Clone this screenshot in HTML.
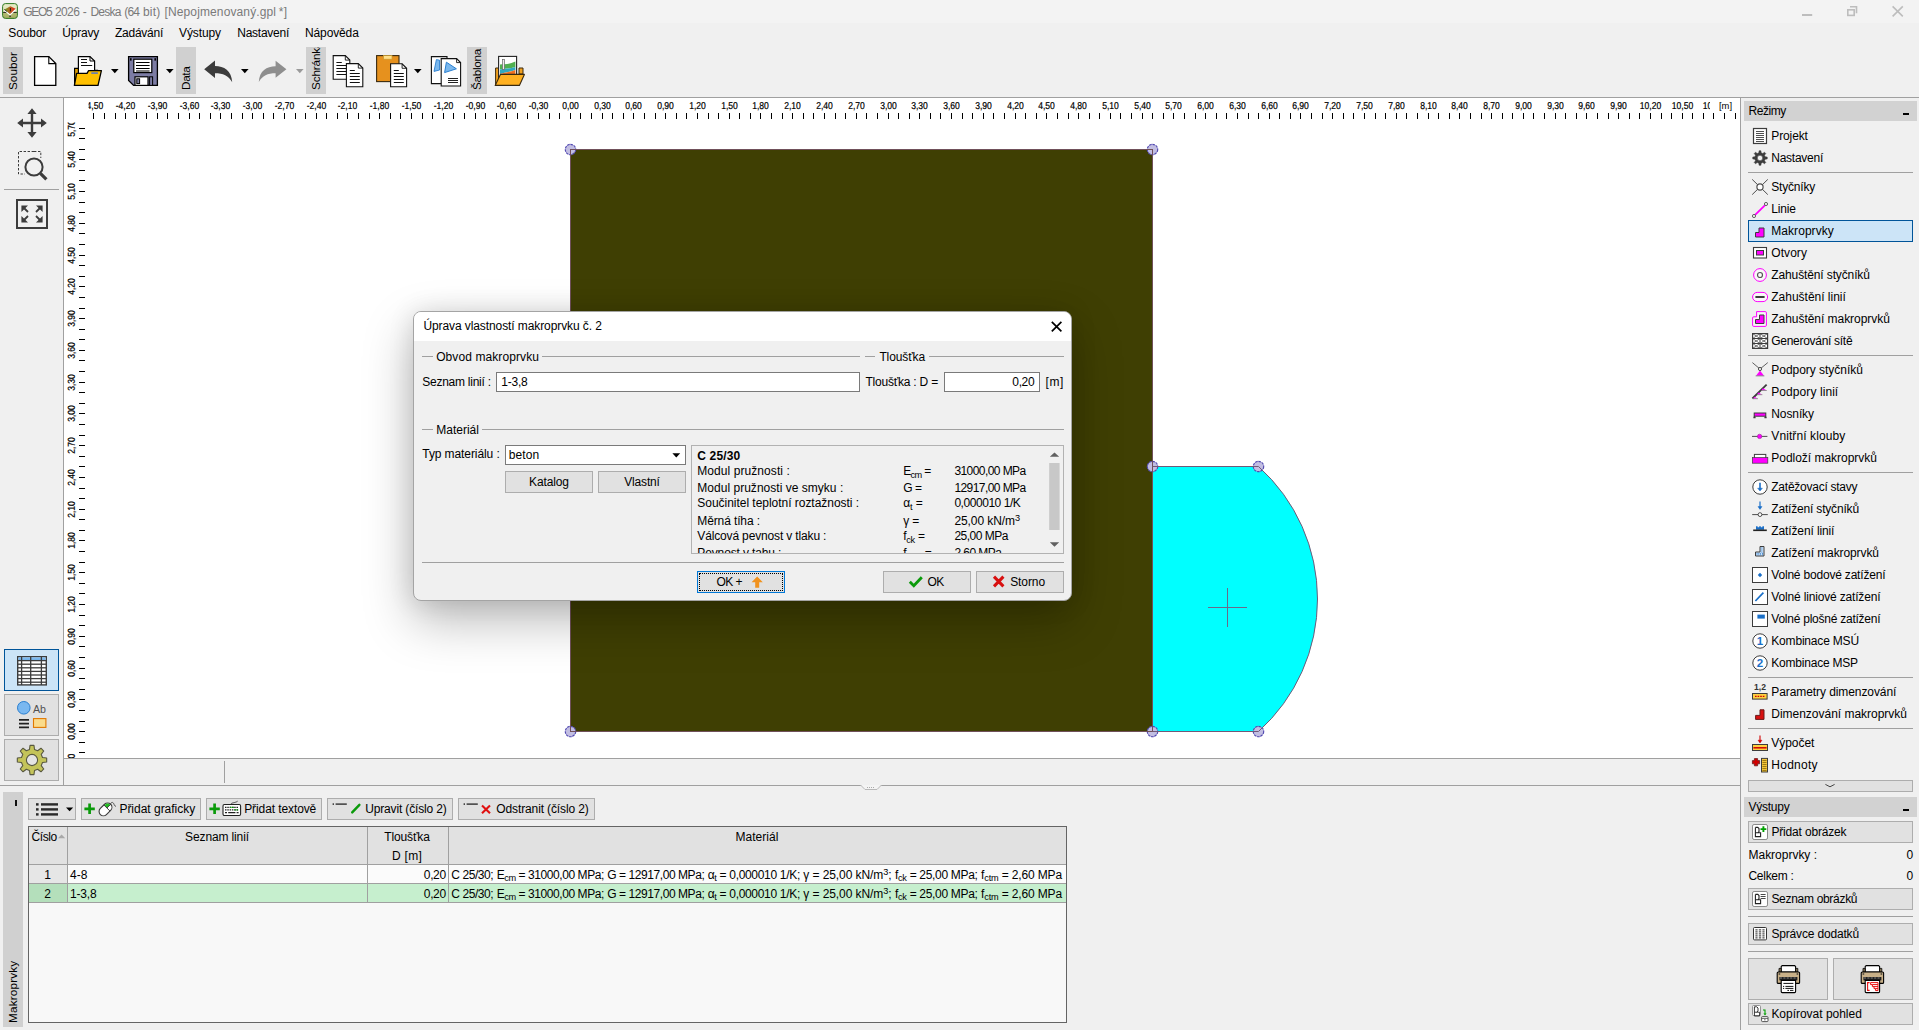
<!DOCTYPE html>
<html lang="cs"><head><meta charset="utf-8"><title>GEO5 2026 - Deska (64 bit) [Nepojmenovaný.gpl *]</title><style>html,body{margin:0;padding:0}
body{width:1919px;height:1030px;overflow:hidden;background:#f0f0f0;font-family:"Liberation Sans",sans-serif;font-size:12px;position:relative}
#app{position:absolute;left:0;top:0;width:1919px;height:1030px;overflow:hidden}
#app div,#app span.t,#app svg{position:absolute}
#app div div,#app div span.t,#app div svg{position:absolute}
.t{white-space:pre;line-height:16px;height:16px}
svg{overflow:visible}
.t sub,.t sup{font-size:9.2px;line-height:0;vertical-align:baseline;position:relative}
.t sub{top:2.6px}
.t sup{top:-4px}
</style></head><body><div id="app">
<div style="left:0px;top:0px;width:1919px;height:23px;background:#f3f3f3;"></div>
<div style="left:0px;top:23px;width:1919px;height:74px;background:#f0f0f0;"></div>
<svg style="left:2px;top:3px;" width="16" height="16" viewBox="0 0 16 16"><defs><linearGradient id="aig" x1="0" y1="0" x2="0" y2="1"><stop offset="0" stop-color="#e8ecc8"/><stop offset="0.55" stop-color="#dde2b8"/><stop offset="0.6" stop-color="#b4bc74"/><stop offset="1" stop-color="#a4ac62"/></linearGradient>
<linearGradient id="aif" x1="0" y1="0" x2="1" y2="0"><stop offset="0" stop-color="#6fa020"/><stop offset="0.45" stop-color="#b06a22"/><stop offset="0.7" stop-color="#d04a22"/><stop offset="1" stop-color="#e81818"/></linearGradient></defs>
<rect x="0.6" y="0.6" width="14.8" height="14.8" rx="2.8" fill="url(#aig)" stroke="#2f7a22" stroke-width="1"/>
<path d="M1.2,9.4 H14.8" stroke="#111" stroke-width="0.9"/>
<path d="M2.4,6.6 L8.4,3.2 L13.6,5.8 L8,11.4 Z" fill="url(#aif)"/>
<path d="M2.2,7 L8,12 L13.6,6.6" fill="none" stroke="#fff" stroke-width="1.2"/>
<path d="M2.2,6.4 L5,8.6" stroke="#222" stroke-width="0.8"/>
<rect x="7.9" y="5" width="1" height="3.4" fill="#2a1a10"/><rect x="7.4" y="12.5" width="1.3" height="1.6" fill="#222"/></svg>
<span class="t" style="left:23.30px;top:3.50px;font-size:12px;color:#7a7a7a;letter-spacing:-1.340px;">GEO5</span>
<span class="t" style="left:55.00px;top:3.50px;font-size:12px;color:#7a7a7a;letter-spacing:-0.626px;">2026</span>
<span class="t" style="left:82.80px;top:3.50px;font-size:12px;color:#7a7a7a;letter-spacing:0.200px;">-</span>
<span class="t" style="left:90.50px;top:3.50px;font-size:12px;color:#7a7a7a;letter-spacing:-0.803px;">Deska</span>
<span class="t" style="left:124.20px;top:3.50px;font-size:12px;color:#7a7a7a;letter-spacing:-0.781px;">(64</span>
<span class="t" style="left:143.00px;top:3.50px;font-size:12px;color:#7a7a7a;letter-spacing:0.182px;">bit)</span>
<span class="t" style="left:164.50px;top:3.50px;font-size:12px;color:#7a7a7a;letter-spacing:0.122px;">[Nepojmenovaný.gpl</span>
<span class="t" style="left:278.70px;top:3.50px;font-size:12px;color:#7a7a7a;letter-spacing:0.492px;">*]</span>
<svg style="left:1795px;top:0px;" width="120" height="23" viewBox="0 0 120 23"><g fill="none" stroke="#bdbdbd" stroke-width="1.6">
<path d="M7,15 H17.2" stroke-width="2"/>
<path d="M55,6.8 H61.5 V13.2"/><rect x="52.8" y="9.8" width="6.4" height="5.6" fill="#f3f3f3"/>
<path d="M97.6,6.4 L107.8,16.4 M107.8,6.4 L97.6,16.4"/></g></svg>
<span class="t" style="left:8.30px;top:25.00px;font-size:12px;color:#000;letter-spacing:-0.167px;">Soubor</span>
<span class="t" style="left:62.30px;top:25.00px;font-size:12px;color:#000;letter-spacing:-0.219px;">Úpravy</span>
<span class="t" style="left:115.00px;top:25.00px;font-size:12px;color:#000;letter-spacing:-0.256px;">Zadávání</span>
<span class="t" style="left:179.00px;top:25.00px;font-size:12px;color:#000;letter-spacing:-0.098px;">Výstupy</span>
<span class="t" style="left:237.30px;top:25.00px;font-size:12px;color:#000;letter-spacing:-0.259px;">Nastavení</span>
<span class="t" style="left:305.00px;top:25.00px;font-size:12px;color:#000;letter-spacing:-0.127px;">Nápověda</span>
<div style="left:3px;top:47px;width:20px;height:47px;background:#d0d0d0;overflow:hidden;"><span class="t" style="left:13.8px;top:43.2px;font-size:11.8px;transform-origin:0 0;transform:rotate(-90deg) translate(0,-12px);letter-spacing:-0.008px;">Soubor</span></div>
<div style="left:176px;top:47px;width:20px;height:47px;background:#d0d0d0;overflow:hidden;"><span class="t" style="left:13.8px;top:43.2px;font-size:11.8px;transform-origin:0 0;transform:rotate(-90deg) translate(0,-12px);letter-spacing:-0.380px;">Data</span></div>
<div style="left:306px;top:47px;width:20px;height:47px;background:#d0d0d0;overflow:hidden;"><span class="t" style="left:13.8px;top:43.2px;font-size:11.8px;transform-origin:0 0;transform:rotate(-90deg) translate(0,-12px);letter-spacing:-0.180px;">Schránka</span></div>
<div style="left:467px;top:47px;width:20px;height:47px;background:#d0d0d0;overflow:hidden;"><span class="t" style="left:13.8px;top:43.2px;font-size:11.8px;transform-origin:0 0;transform:rotate(-90deg) translate(0,-12px);letter-spacing:-0.328px;">Šablona</span></div>
<svg style="left:110.8px;top:69px;" width="8" height="5" viewBox="0 0 8 5"><path d="M0,0 H7.6 L3.8,4.2 Z" fill="#000"/></svg>
<svg style="left:165.6px;top:69px;" width="8" height="5" viewBox="0 0 8 5"><path d="M0,0 H7.6 L3.8,4.2 Z" fill="#000"/></svg>
<svg style="left:240.7px;top:69px;" width="8" height="5" viewBox="0 0 8 5"><path d="M0,0 H7.6 L3.8,4.2 Z" fill="#000"/></svg>
<svg style="left:413.8px;top:69px;" width="8" height="5" viewBox="0 0 8 5"><path d="M0,0 H7.6 L3.8,4.2 Z" fill="#000"/></svg>
<svg style="left:295.5px;top:69px;" width="8" height="5" viewBox="0 0 8 5"><path d="M0,0 H7.6 L3.8,4.2 Z" fill="#9a9a9a"/></svg>
<svg style="left:30px;top:52px;" width="30" height="38" viewBox="0 0 30 38"><path d="M4.6,4.6 H18.8 L25.8,11.6 V33.4 H4.6 Z" fill="#fff" stroke="#000" stroke-width="1.3"/>
<path d="M18.8,4.6 V11.6 H25.8" fill="none" stroke="#000" stroke-width="1.1"/></svg>
<svg style="left:72px;top:52px;" width="32" height="38" viewBox="0 0 32 38"><path d="M2.6,33.4 V16.4 H8 L10,18.4 H25.5 V33.4 Z" fill="#e0a000" stroke="#000" stroke-width="1.2"/>
<path d="M6.4,24 V4.6 H18 L22.6,9 V22 Z" fill="#fff" stroke="#000" stroke-width="1.2"/>
<path d="M18,4.6 V9 H22.6" fill="none" stroke="#000" stroke-width="1"/>
<path d="M9,7.5 H15 M9,10.5 H15 M9,13.5 H20.2" stroke="#111" stroke-width="1"/>
<path d="M2.4,33.4 L4.6,21.4 H15 L16.6,18.6 H29.4 L26,33.4 Z" fill="#ffc000" stroke="#000" stroke-width="1.3" stroke-linejoin="round"/>
<rect x="19.3" y="20.2" width="6.6" height="1.8" fill="#7080a8"/></svg>
<svg style="left:126px;top:52px;" width="34" height="38" viewBox="0 0 34 38"><path d="M2.6,4.6 H31.4 V33.4 H7.6 L2.6,28.4 Z" fill="#7c7ca4" stroke="#000" stroke-width="1.3"/>
<rect x="7.8" y="7.2" width="18" height="13.4" fill="#fff" stroke="#000" stroke-width="1.2"/>
<path d="M10,10.5 H23.6 M10,13.5 H23.6 M10,16.5 H23.6 M10,19 H23.6" stroke="#000" stroke-width="1"/>
<rect x="4" y="6.2" width="1.6" height="2.4" fill="#000"/><rect x="28.4" y="6.2" width="1.6" height="2.4" fill="#000"/>
<rect x="9" y="24.8" width="13" height="8.6" fill="#fff" stroke="#000" stroke-width="1.2"/>
<rect x="10.8" y="26.8" width="2.8" height="4.8" fill="#7c7ca4" stroke="#000" stroke-width="1"/>
<rect x="23.6" y="24.8" width="3" height="8.6" fill="#7c7ca4" stroke="#000" stroke-width="1"/></svg>
<svg style="left:202px;top:58px;" width="32" height="26" viewBox="0 0 32 26"><path d="M2.2,11.3 L13,2.4 V8 C22,8 29.6,12.5 30.2,24.2 C26.5,17.5 21,15.2 13,15.2 V20 Z" fill="#3c3c3c"/></svg>
<svg style="left:256px;top:58px;" width="32" height="26" viewBox="0 0 32 26"><path d="M30.4,11.3 L19.6,2.8 V8.2 C10.6,8.2 3.4,12.7 2.8,24 C6.5,17.5 11.6,15.2 19.6,15.2 V19.8 Z" fill="#8e8e8e"/></svg>
<svg style="left:330px;top:52px;" width="36" height="38" viewBox="0 0 36 38"><path d="M3.2,3.6 H15.3 L19.8,8.1 V27.200000000000003 H3.2 Z" fill="#fff" stroke="#111" stroke-width="1.1"/><path d="M15.3,3.6 V8.1 H19.8" fill="none" stroke="#111" stroke-width="0.9"/><path d="M6.4,10.5 H11.8" stroke="#111" stroke-width="1"/><path d="M6.4,13.5 H17" stroke="#111" stroke-width="1"/><path d="M6.4,16.5 H17" stroke="#111" stroke-width="1"/><path d="M6.4,19.5 H17" stroke="#111" stroke-width="1"/><path d="M6.4,22.5 H17" stroke="#111" stroke-width="1"/><path d="M16.4,11.6 H28.299999999999997 L32.8,16.1 V34.8 H16.4 Z" fill="#fff" stroke="#111" stroke-width="1.1"/><path d="M28.299999999999997,11.6 V16.1 H32.8" fill="none" stroke="#111" stroke-width="0.9"/><path d="M19.8,18.5 H24.8" stroke="#111" stroke-width="1"/><path d="M19.8,21.5 H29.8" stroke="#111" stroke-width="1"/><path d="M19.8,24.5 H29.8" stroke="#111" stroke-width="1"/><path d="M19.8,27.5 H29.8" stroke="#111" stroke-width="1"/><path d="M19.8,30.5 H29.8" stroke="#111" stroke-width="1"/></svg>
<svg style="left:374px;top:52px;" width="36" height="38" viewBox="0 0 36 38"><rect x="2.6" y="3.6" width="22.4" height="26" fill="#e6911e" stroke="#3a2a10" stroke-width="1.1"/>
<rect x="9.6" y="3.6" width="8.4" height="3.6" fill="#ffe08a" stroke="#c89a30" stroke-width="0.7"/><path d="M16.6,11.8 H28.1 L32.6,16.3 V34.8 H16.6 Z" fill="#fff" stroke="#111" stroke-width="1.1"/><path d="M28.1,11.8 V16.3 H32.6" fill="none" stroke="#111" stroke-width="0.9"/><path d="M19.8,18.5 H24.8" stroke="#111" stroke-width="1"/><path d="M19.8,21.5 H29.8" stroke="#111" stroke-width="1"/><path d="M19.8,24.5 H29.8" stroke="#111" stroke-width="1"/><path d="M19.8,27.5 H29.8" stroke="#111" stroke-width="1"/><path d="M19.8,30.5 H29.8" stroke="#111" stroke-width="1"/></svg>
<svg style="left:428px;top:52px;" width="36" height="38" viewBox="0 0 36 38"><path d="M3.4,4.6 H19 V31.6 H3.4 Z" fill="#fff" stroke="#111" stroke-width="1.1"/>
<path d="M8.4,7.6 L11.5,8.2 L11.6,18 L6,19.4 Z" fill="#7ab8ee" stroke="#2a7fd0" stroke-width="0.9"/><path d="M13.2,6.6 H28.599999999999994 L32.599999999999994,10.6 V34.0 H13.2 Z" fill="#fff" stroke="#111" stroke-width="1.1"/><path d="M28.599999999999994,6.6 V10.6 H32.599999999999994" fill="none" stroke="#111" stroke-width="0.9"/><path d="M18.4,10.2 L28.4,16.8 L16.6,20.6 Z" fill="#7ab8ee" stroke="#2a7fd0" stroke-width="1"/><path d="M20,26.5 H30" stroke="#222" stroke-width="1"/><path d="M20,28.5 H30" stroke="#222" stroke-width="1"/><path d="M20,30.5 H30" stroke="#222" stroke-width="1"/></svg>
<svg style="left:492px;top:52px;" width="36" height="38" viewBox="0 0 36 38"><path d="M3.6,33 V16 H8 V33 Z M27,16 H31 V22 H27 Z" fill="#f0a020" stroke="#3a2a10" stroke-width="1"/>
<rect x="6.6" y="4.4" width="18" height="22" fill="#fff" stroke="#222" stroke-width="1.1"/>
<path d="M8,12.5 C12,12 17,12.6 23.4,9.6 V15 C17,17 12,16 8,17.5 Z" fill="#50b050"/>
<path d="M8,17.5 C12,16 17,17 23.4,15 V18 C17,20 12,21 8,22 Z" fill="#30a8c0"/>
<path d="M8,22 C12,21 17,20 23.4,18 V26 H8 Z" fill="#f07020"/>
<rect x="10.4" y="7.4" width="2" height="10" fill="#eee" stroke="#666" stroke-width="0.7"/>
<path d="M3.2,33.4 L8.4,22.4 H32.4 L27.4,33.4 Z" fill="#ffb020" stroke="#3a2a10" stroke-width="1.1" stroke-linejoin="round"/></svg>
<div style="left:0px;top:97px;width:1919px;height:1px;background:#a0a0a0"></div>
<div style="left:64px;top:98px;width:1676px;height:660px;background:#fff;"></div>
<div style="left:63px;top:98px;width:1px;height:687px;background:#a0a0a0"></div>
<div style="left:1740px;top:98px;width:1px;height:932px;background:#a0a0a0"></div>
<div style="left:64px;top:758px;width:1676px;height:1px;background:#a0a0a0"></div>
<div style="left:0px;top:785px;width:1741px;height:1px;background:#a0a0a0"></div>
<div style="left:224px;top:761px;width:1px;height:22px;background:#a0a0a0"></div>
<svg style="left:0;top:0" width="1919" height="1030" viewBox="0 0 1919 1030" font-family="Liberation Sans, sans-serif"><defs><clipPath id="hclip"><rect x="88.5" y="98" width="1621.5" height="24"/></clipPath><clipPath id="vclip"><rect x="64" y="122.6" width="24" height="635.4"/></clipPath></defs><rect x="570.5" y="149.5" width="582.0" height="582.0" fill="#3f3f03"/><path d="M1152.5,466.5 H1258.5 A178.28,178.28 0 0 1 1258.5,731.5 H1152.5 Z" fill="#00ffff"/><circle cx="570.5" cy="149.5" r="5.2" fill="#c2bee2" stroke="#5048b0" stroke-width="1.15" stroke-dasharray="2.6 0.8"/><circle cx="1152.5" cy="149.5" r="5.2" fill="#c2bee2" stroke="#5048b0" stroke-width="1.15" stroke-dasharray="2.6 0.8"/><circle cx="570.5" cy="731.5" r="5.2" fill="#c2bee2" stroke="#5048b0" stroke-width="1.15" stroke-dasharray="2.6 0.8"/><circle cx="1152.5" cy="731.5" r="5.2" fill="#c2bee2" stroke="#5048b0" stroke-width="1.15" stroke-dasharray="2.6 0.8"/><circle cx="1152.5" cy="466.5" r="5.2" fill="#c2bee2" stroke="#5048b0" stroke-width="1.15" stroke-dasharray="2.6 0.8"/><circle cx="1258.5" cy="466.5" r="5.2" fill="#c2bee2" stroke="#5048b0" stroke-width="1.15" stroke-dasharray="2.6 0.8"/><circle cx="1258.5" cy="731.5" r="5.2" fill="#c2bee2" stroke="#5048b0" stroke-width="1.15" stroke-dasharray="2.6 0.8"/><rect x="570.5" y="149.5" width="582.0" height="582.0" fill="none" stroke="#70505a" stroke-width="1"/><path d="M1152.5,466.5 H1258.5 A178.28,178.28 0 0 1 1258.5,731.5 H1152.5" fill="none" stroke="#705a78" stroke-width="1"/><path d="M1208,607.5 H1247 M1227.5,588 V627" stroke="#6a6a8a" stroke-width="1" fill="none"/><path d="M93.5,113 V119 M104.5,113 V119 M115.5,113 V119 M125.5,113 V119 M136.5,113 V119 M146.5,113 V119 M157.5,113 V119 M167.5,113 V119 M178.5,113 V119 M189.5,113 V119 M199.5,113 V119 M210.5,113 V119 M220.5,113 V119 M231.5,113 V119 M242.5,113 V119 M252.5,113 V119 M263.5,113 V119 M273.5,113 V119 M284.5,113 V119 M295.5,113 V119 M305.5,113 V119 M316.5,113 V119 M326.5,113 V119 M337.5,113 V119 M347.5,113 V119 M358.5,113 V119 M369.5,113 V119 M379.5,113 V119 M390.5,113 V119 M400.5,113 V119 M411.5,113 V119 M422.5,113 V119 M432.5,113 V119 M443.5,113 V119 M453.5,113 V119 M464.5,113 V119 M475.5,113 V119 M485.5,113 V119 M496.5,113 V119 M506.5,113 V119 M517.5,113 V119 M527.5,113 V119 M538.5,113 V119 M549.5,113 V119 M559.5,113 V119 M570.5,113 V119 M580.5,113 V119 M591.5,113 V119 M602.5,113 V119 M612.5,113 V119 M623.5,113 V119 M633.5,113 V119 M644.5,113 V119 M655.5,113 V119 M665.5,113 V119 M676.5,113 V119 M686.5,113 V119 M697.5,113 V119 M708.5,113 V119 M718.5,113 V119 M729.5,113 V119 M739.5,113 V119 M750.5,113 V119 M760.5,113 V119 M771.5,113 V119 M782.5,113 V119 M792.5,113 V119 M803.5,113 V119 M813.5,113 V119 M824.5,113 V119 M835.5,113 V119 M845.5,113 V119 M856.5,113 V119 M866.5,113 V119 M877.5,113 V119 M888.5,113 V119 M898.5,113 V119 M909.5,113 V119 M919.5,113 V119 M930.5,113 V119 M940.5,113 V119 M951.5,113 V119 M962.5,113 V119 M972.5,113 V119 M983.5,113 V119 M993.5,113 V119 M1004.5,113 V119 M1015.5,113 V119 M1025.5,113 V119 M1036.5,113 V119 M1046.5,113 V119 M1057.5,113 V119 M1068.5,113 V119 M1078.5,113 V119 M1089.5,113 V119 M1099.5,113 V119 M1110.5,113 V119 M1120.5,113 V119 M1131.5,113 V119 M1142.5,113 V119 M1152.5,113 V119 M1163.5,113 V119 M1173.5,113 V119 M1184.5,113 V119 M1195.5,113 V119 M1205.5,113 V119 M1216.5,113 V119 M1226.5,113 V119 M1237.5,113 V119 M1248.5,113 V119 M1258.5,113 V119 M1269.5,113 V119 M1279.5,113 V119 M1290.5,113 V119 M1300.5,113 V119 M1311.5,113 V119 M1322.5,113 V119 M1332.5,113 V119 M1343.5,113 V119 M1353.5,113 V119 M1364.5,113 V119 M1375.5,113 V119 M1385.5,113 V119 M1396.5,113 V119 M1406.5,113 V119 M1417.5,113 V119 M1428.5,113 V119 M1438.5,113 V119 M1449.5,113 V119 M1459.5,113 V119 M1470.5,113 V119 M1481.5,113 V119 M1491.5,113 V119 M1502.5,113 V119 M1512.5,113 V119 M1523.5,113 V119 M1533.5,113 V119 M1544.5,113 V119 M1555.5,113 V119 M1565.5,113 V119 M1576.5,113 V119 M1586.5,113 V119 M1597.5,113 V119 M1608.5,113 V119 M1618.5,113 V119 M1629.5,113 V119 M1639.5,113 V119 M1650.5,113 V119 M1661.5,113 V119 M1671.5,113 V119 M1682.5,113 V119 M1692.5,113 V119 M1703.5,113 V119 M1713.5,113 V119 M1724.5,113 V119 M1735.5,113 V119 M79,752.5 H85 M79,742.5 H85 M79,731.5 H85 M79,721.5 H85 M79,710.5 H85 M79,699.5 H85 M79,689.5 H85 M79,678.5 H85 M79,668.5 H85 M79,657.5 H85 M79,646.5 H85 M79,636.5 H85 M79,625.5 H85 M79,615.5 H85 M79,604.5 H85 M79,593.5 H85 M79,583.5 H85 M79,572.5 H85 M79,562.5 H85 M79,551.5 H85 M79,540.5 H85 M79,530.5 H85 M79,519.5 H85 M79,509.5 H85 M79,498.5 H85 M79,488.5 H85 M79,477.5 H85 M79,466.5 H85 M79,456.5 H85 M79,445.5 H85 M79,435.5 H85 M79,424.5 H85 M79,413.5 H85 M79,403.5 H85 M79,392.5 H85 M79,382.5 H85 M79,371.5 H85 M79,360.5 H85 M79,350.5 H85 M79,339.5 H85 M79,329.5 H85 M79,318.5 H85 M79,308.5 H85 M79,297.5 H85 M79,286.5 H85 M79,276.5 H85 M79,265.5 H85 M79,255.5 H85 M79,244.5 H85 M79,233.5 H85 M79,223.5 H85 M79,212.5 H85 M79,202.5 H85 M79,191.5 H85 M79,180.5 H85 M79,170.5 H85 M79,159.5 H85 M79,149.5 H85 M79,138.5 H85 M79,128.5 H85" stroke="#000" stroke-width="1" fill="none" shape-rendering="crispEdges"/><g clip-path="url(#hclip)" font-size="10" text-anchor="middle" fill="#000" stroke="#000" stroke-width="0.22"><text transform="translate(93.5,109) rotate(0.05) scale(0.86,1)">-4,50</text><text transform="translate(125.5,109) rotate(0.05) scale(0.86,1)">-4,20</text><text transform="translate(157.5,109) rotate(0.05) scale(0.86,1)">-3,90</text><text transform="translate(189.5,109) rotate(0.05) scale(0.86,1)">-3,60</text><text transform="translate(220.5,109) rotate(0.05) scale(0.86,1)">-3,30</text><text transform="translate(252.5,109) rotate(0.05) scale(0.86,1)">-3,00</text><text transform="translate(284.5,109) rotate(0.05) scale(0.86,1)">-2,70</text><text transform="translate(316.5,109) rotate(0.05) scale(0.86,1)">-2,40</text><text transform="translate(347.5,109) rotate(0.05) scale(0.86,1)">-2,10</text><text transform="translate(379.5,109) rotate(0.05) scale(0.86,1)">-1,80</text><text transform="translate(411.5,109) rotate(0.05) scale(0.86,1)">-1,50</text><text transform="translate(443.5,109) rotate(0.05) scale(0.86,1)">-1,20</text><text transform="translate(475.5,109) rotate(0.05) scale(0.86,1)">-0,90</text><text transform="translate(506.5,109) rotate(0.05) scale(0.86,1)">-0,60</text><text transform="translate(538.5,109) rotate(0.05) scale(0.86,1)">-0,30</text><text transform="translate(570.5,109) rotate(0.05) scale(0.86,1)">0,00</text><text transform="translate(602.5,109) rotate(0.05) scale(0.86,1)">0,30</text><text transform="translate(633.5,109) rotate(0.05) scale(0.86,1)">0,60</text><text transform="translate(665.5,109) rotate(0.05) scale(0.86,1)">0,90</text><text transform="translate(697.5,109) rotate(0.05) scale(0.86,1)">1,20</text><text transform="translate(729.5,109) rotate(0.05) scale(0.86,1)">1,50</text><text transform="translate(760.5,109) rotate(0.05) scale(0.86,1)">1,80</text><text transform="translate(792.5,109) rotate(0.05) scale(0.86,1)">2,10</text><text transform="translate(824.5,109) rotate(0.05) scale(0.86,1)">2,40</text><text transform="translate(856.5,109) rotate(0.05) scale(0.86,1)">2,70</text><text transform="translate(888.5,109) rotate(0.05) scale(0.86,1)">3,00</text><text transform="translate(919.5,109) rotate(0.05) scale(0.86,1)">3,30</text><text transform="translate(951.5,109) rotate(0.05) scale(0.86,1)">3,60</text><text transform="translate(983.5,109) rotate(0.05) scale(0.86,1)">3,90</text><text transform="translate(1015.5,109) rotate(0.05) scale(0.86,1)">4,20</text><text transform="translate(1046.5,109) rotate(0.05) scale(0.86,1)">4,50</text><text transform="translate(1078.5,109) rotate(0.05) scale(0.86,1)">4,80</text><text transform="translate(1110.5,109) rotate(0.05) scale(0.86,1)">5,10</text><text transform="translate(1142.5,109) rotate(0.05) scale(0.86,1)">5,40</text><text transform="translate(1173.5,109) rotate(0.05) scale(0.86,1)">5,70</text><text transform="translate(1205.5,109) rotate(0.05) scale(0.86,1)">6,00</text><text transform="translate(1237.5,109) rotate(0.05) scale(0.86,1)">6,30</text><text transform="translate(1269.5,109) rotate(0.05) scale(0.86,1)">6,60</text><text transform="translate(1300.5,109) rotate(0.05) scale(0.86,1)">6,90</text><text transform="translate(1332.5,109) rotate(0.05) scale(0.86,1)">7,20</text><text transform="translate(1364.5,109) rotate(0.05) scale(0.86,1)">7,50</text><text transform="translate(1396.5,109) rotate(0.05) scale(0.86,1)">7,80</text><text transform="translate(1428.5,109) rotate(0.05) scale(0.86,1)">8,10</text><text transform="translate(1459.5,109) rotate(0.05) scale(0.86,1)">8,40</text><text transform="translate(1491.5,109) rotate(0.05) scale(0.86,1)">8,70</text><text transform="translate(1523.5,109) rotate(0.05) scale(0.86,1)">9,00</text><text transform="translate(1555.5,109) rotate(0.05) scale(0.86,1)">9,30</text><text transform="translate(1586.5,109) rotate(0.05) scale(0.86,1)">9,60</text><text transform="translate(1618.5,109) rotate(0.05) scale(0.86,1)">9,90</text><text transform="translate(1650.5,109) rotate(0.05) scale(0.86,1)">10,20</text><text transform="translate(1682.5,109) rotate(0.05) scale(0.86,1)">10,50</text><text transform="translate(1713.5,109) rotate(0.05) scale(0.86,1)">10,80</text></g><g clip-path="url(#vclip)" font-size="10" text-anchor="middle" fill="#000" stroke="#000" stroke-width="0.22"><text transform="translate(74.7,763.5) rotate(-90.05) scale(0.86,1)">-0,30</text><text transform="translate(74.7,731.5) rotate(-90.05) scale(0.86,1)">0,00</text><text transform="translate(74.7,699.5) rotate(-90.05) scale(0.86,1)">0,30</text><text transform="translate(74.7,668.5) rotate(-90.05) scale(0.86,1)">0,60</text><text transform="translate(74.7,636.5) rotate(-90.05) scale(0.86,1)">0,90</text><text transform="translate(74.7,604.5) rotate(-90.05) scale(0.86,1)">1,20</text><text transform="translate(74.7,572.5) rotate(-90.05) scale(0.86,1)">1,50</text><text transform="translate(74.7,540.5) rotate(-90.05) scale(0.86,1)">1,80</text><text transform="translate(74.7,509.5) rotate(-90.05) scale(0.86,1)">2,10</text><text transform="translate(74.7,477.5) rotate(-90.05) scale(0.86,1)">2,40</text><text transform="translate(74.7,445.5) rotate(-90.05) scale(0.86,1)">2,70</text><text transform="translate(74.7,413.5) rotate(-90.05) scale(0.86,1)">3,00</text><text transform="translate(74.7,382.5) rotate(-90.05) scale(0.86,1)">3,30</text><text transform="translate(74.7,350.5) rotate(-90.05) scale(0.86,1)">3,60</text><text transform="translate(74.7,318.5) rotate(-90.05) scale(0.86,1)">3,90</text><text transform="translate(74.7,286.5) rotate(-90.05) scale(0.86,1)">4,20</text><text transform="translate(74.7,255.5) rotate(-90.05) scale(0.86,1)">4,50</text><text transform="translate(74.7,223.5) rotate(-90.05) scale(0.86,1)">4,80</text><text transform="translate(74.7,191.5) rotate(-90.05) scale(0.86,1)">5,10</text><text transform="translate(74.7,159.5) rotate(-90.05) scale(0.86,1)">5,40</text><text transform="translate(74.7,128.5) rotate(-90.05) scale(0.86,1)">5,70</text></g><text x="1719" y="109.2" font-size="9.6" fill="#000" transform="translate(1719,0) scale(0.98,1) translate(-1719,0)">[m]</text></svg>
<svg style="left:860px;top:785px;" width="22" height="6" viewBox="0 0 22 6"><path d="M0.5,0 L5,4.5 H17 L21.5,0" fill="#f4f4f4" stroke="#b8b8b8" stroke-width="1"/><path d="M7,2.5 H15" stroke="#aaa" stroke-width="1" stroke-dasharray="1 1"/></svg>
<svg style="left:16px;top:107px;" width="32" height="32" viewBox="0 0 32 32"><path d="M16,4 V28 M4,16 H28" stroke="#3c3c3c" stroke-width="2.4" fill="none"/>
<path d="M16,1.2 L20.6,7 H11.4 Z M16,30.8 L20.6,25 H11.4 Z M1.2,16 L7,11.4 V20.6 Z M30.8,16 L25,11.4 V20.6 Z" fill="#3c3c3c"/></svg>
<svg style="left:16px;top:149px;" width="34" height="34" viewBox="0 0 34 34"><path d="M18,2.5 H2.5 V25 H9" fill="none" stroke="#3c3c3c" stroke-width="1" stroke-dasharray="2.4 1.6"/>
<path d="M18,2.5 H24.8 V9" fill="none" stroke="#3c3c3c" stroke-width="1" stroke-dasharray="2.4 1.6"/>
<circle cx="18" cy="18" r="8.6" fill="#f0f0f0" stroke="#3c3c3c" stroke-width="2"/>
<path d="M24.4,24.4 L30.4,30.4" stroke="#3c3c3c" stroke-width="3.2"/></svg>
<div style="left:4px;top:189px;width:55px;height:1px;background:#a0a0a0"></div>
<svg style="left:16px;top:199px;" width="32" height="30" viewBox="0 0 32 30"><rect x="1" y="1" width="30" height="28" fill="none" stroke="#3c3c3c" stroke-width="2"/>
<g fill="#3c3c3c"><path d="M5.4,6.4 H12 L5.4,13 Z M26.6,6.4 H20 L26.600,13 Z M5.4,23.6 H12 L5.4,17 Z M26.6,23.6 H20 L26.6,17 Z"/></g>
<path d="M7,8 L12,13 M25,8 L20,13 M7,22 L12,17 M25,22 L20,17" stroke="#3c3c3c" stroke-width="1.8"/></svg>
<div style="left:4px;top:649px;width:55px;height:42px;background:#cce4f7;border:1px solid #005499;box-sizing:border-box;"></div>
<div style="left:4px;top:694px;width:55px;height:42px;background:#e1e1e1;border:1px solid #adadad;box-sizing:border-box;"></div>
<div style="left:4px;top:739px;width:55px;height:42px;background:#e1e1e1;border:1px solid #adadad;box-sizing:border-box;"></div>
<svg style="left:17px;top:656px;" width="30" height="30" viewBox="0 0 30 30"><rect x="0.7" y="0.7" width="28.6" height="28.2" fill="#fff" stroke="#3c3c3c" stroke-width="1.4"/>
<rect x="1.4" y="1.4" width="27.2" height="3" fill="#7ab8f0"/><path d="M0.5,4.6 H29.5" stroke="#3c3c3c" stroke-width="1.3"/><path d="M0.5,8.2 H29.5" stroke="#3c3c3c" stroke-width="1.3"/><path d="M0.5,11.8 H29.5" stroke="#3c3c3c" stroke-width="1.3"/><path d="M0.5,15.4 H29.5" stroke="#3c3c3c" stroke-width="1.3"/><path d="M0.5,19 H29.5" stroke="#3c3c3c" stroke-width="1.3"/><path d="M0.5,22.6 H29.5" stroke="#3c3c3c" stroke-width="1.3"/><path d="M0.5,26.2 H29.5" stroke="#3c3c3c" stroke-width="1.3"/>
<path d="M4.6,0.7 V29 M13.7,0.7 V29 M24.4,0.7 V29" stroke="#3c3c3c" stroke-width="1.3"/></svg>
<svg style="left:16px;top:700px;" width="32" height="30" viewBox="0 0 32 30"><circle cx="7.8" cy="7.8" r="6.3" fill="#7ab8f0" stroke="#2a7fd0" stroke-width="1"/>
<path d="M3,19.8 H13 M3,23.6 H13 M3,27.4 H13" stroke="#222" stroke-width="1.7"/>
<rect x="17.5" y="18.6" width="12.4" height="8.8" fill="#fadc8c" stroke="#e07800" stroke-width="1.1"/>
<text x="17" y="13" font-family="Liberation Sans, sans-serif" font-size="11.5" fill="#505050" textLength="13" lengthAdjust="spacingAndGlyphs">Ab</text></svg>
<svg style="left:16px;top:744px;" width="32" height="32" viewBox="0 0 32 32"><path d="M13.48,5.50 L14.03,1.33 L17.97,1.33 L18.52,5.50 L21.64,6.79 L24.98,4.23 L27.77,7.02 L25.21,10.36 L26.50,13.48 L30.67,14.03 L30.67,17.97 L26.50,18.52 L25.21,21.64 L27.77,24.98 L24.98,27.77 L21.64,25.21 L18.52,26.50 L17.97,30.67 L14.03,30.67 L13.48,26.50 L10.36,25.21 L7.02,27.77 L4.23,24.98 L6.79,21.64 L5.50,18.52 L1.33,17.97 L1.33,14.03 L5.50,13.48 L6.79,10.36 L4.23,7.02 L7.02,4.23 L10.36,6.79 Z" fill="#c4c45a" stroke="#585840" stroke-width="1.1" stroke-linejoin="round"/><circle cx="16" cy="16" r="5.6" fill="#e4e4e4" stroke="#585840" stroke-width="1.1"/></svg>
<div style="left:1741px;top:98px;width:178px;height:932px;background:#f0f0f0;"></div>
<div style="left:1744px;top:101px;width:173px;height:20px;background:#d2d2d2;"></div>
<span class="t" style="left:1748.50px;top:103.00px;font-size:12px;color:#000;letter-spacing:-0.469px;">Režimy</span>
<div style="left:1903px;top:113px;width:6px;height:2px;background:#000;"></div>
<svg style="left:1750px;top:126px;" width="20" height="20" viewBox="0 0 20 20"><rect x="3.5" y="2.5" width="13" height="15" fill="#fff" stroke="#3c3c3c" stroke-width="1.2"/><path d="M6,5.5 H14 M6,7.5 H14 M6,9.5 H14 M6,11.5 H14 M6,13.5 H14 M6,15.5 H14" stroke="#3c3c3c" stroke-width="0.9"/></svg>
<span class="t" style="left:1771.30px;top:128.00px;font-size:12px;color:#000;letter-spacing:-0.123px;">Projekt</span>
<svg style="left:1750px;top:148px;" width="20" height="20" viewBox="0 0 20 20"><path d="M8.84,4.83 L9.03,2.76 L10.97,2.76 L11.16,4.83 L12.84,5.53 L14.43,4.20 L15.80,5.57 L14.47,7.16 L15.17,8.84 L17.24,9.03 L17.24,10.97 L15.17,11.16 L14.47,12.84 L15.80,14.43 L14.43,15.80 L12.84,14.47 L11.16,15.17 L10.97,17.24 L9.03,17.24 L8.84,15.17 L7.16,14.47 L5.57,15.80 L4.20,14.43 L5.53,12.84 L4.83,11.16 L2.76,10.97 L2.76,9.03 L4.83,8.84 L5.53,7.16 L4.20,5.57 L5.57,4.20 L7.16,5.53 Z" fill="#3c3c3c" stroke="#3c3c3c" stroke-width="0.5" stroke-linejoin="round"/><circle cx="10" cy="10" r="2.7" fill="#f0f0f0" stroke="#3c3c3c" stroke-width="0.5"/></svg>
<span class="t" style="left:1771.30px;top:150.00px;font-size:12px;color:#000;letter-spacing:-0.259px;">Nastavení</span>
<div style="left:1748px;top:172px;width:165px;height:1px;background:#a0a0a0"></div>
<svg style="left:1750px;top:177px;" width="20" height="20" viewBox="0 0 20 20"><path d="M2.2,2.4 L17.8,17.6 M17.8,2.4 L2.2,17.6" stroke="#3c3c3c" stroke-width="0.9"/><circle cx="10" cy="10" r="3.1" fill="#fff" stroke="#505050" stroke-width="1.2"/></svg>
<span class="t" style="left:1771.30px;top:179.00px;font-size:12px;color:#000;letter-spacing:-0.195px;">Styčníky</span>
<svg style="left:1750px;top:199px;" width="20" height="20" viewBox="0 0 20 20"><path d="M4.6,16.4 L15.6,5.6" stroke="#ff00ff" stroke-width="1.8"/><circle cx="4" cy="17" r="1.6" fill="#f0f0f0" stroke="#555" stroke-width="0.9"/><circle cx="16" cy="5" r="1.6" fill="#f0f0f0" stroke="#555" stroke-width="0.9"/></svg>
<span class="t" style="left:1771.30px;top:201.00px;font-size:12px;color:#000;letter-spacing:-0.172px;">Linie</span>
<div style="left:1748px;top:220px;width:165px;height:22px;background:#cce4f7;border:1px solid #005499;box-sizing:border-box;"></div>
<svg style="left:1750px;top:221px;" width="20" height="20" viewBox="0 0 20 20"><path d="M9,7.0 H14 V16.0 H5.5 V11.5 H9 Z" fill="#ff00ff" stroke="#3c3c3c" stroke-width="1"/></svg>
<span class="t" style="left:1771.30px;top:223.00px;font-size:12px;color:#000;letter-spacing:0.048px;">Makroprvky</span>
<svg style="left:1750px;top:243px;" width="20" height="20" viewBox="0 0 20 20"><rect x="3.5" y="4.5" width="13" height="10.5" fill="#fff" stroke="#3c3c3c" stroke-width="1.1"/><rect x="6.5" y="7.5" width="7" height="4.5" fill="#ff00ff" stroke="#3c3c3c" stroke-width="1"/></svg>
<span class="t" style="left:1771.30px;top:245.00px;font-size:12px;color:#000;letter-spacing:0.059px;">Otvory</span>
<svg style="left:1750px;top:265px;" width="20" height="20" viewBox="0 0 20 20"><circle cx="10" cy="10" r="6.4" fill="#f8f8f8" stroke="#ff00ff" stroke-width="1"/><circle cx="10" cy="10" r="2.5" fill="#fff" stroke="#555" stroke-width="1.2"/></svg>
<span class="t" style="left:1771.30px;top:267.00px;font-size:12px;color:#000;letter-spacing:-0.123px;">Zahuštění styčníků</span>
<svg style="left:1750px;top:287px;" width="20" height="20" viewBox="0 0 20 20"><rect x="2.6" y="5.4" width="15" height="9.2" rx="4.6" fill="#f8f8f8" stroke="#ff00ff" stroke-width="1"/><path d="M5.4,10 H14.6" stroke="#3c3c3c" stroke-width="2"/></svg>
<span class="t" style="left:1771.30px;top:289.00px;font-size:12px;color:#000;letter-spacing:-0.015px;">Zahuštění linií</span>
<svg style="left:1750px;top:309px;" width="20" height="20" viewBox="0 0 20 20"><path d="M6.6,2.6 H15.2 Q16.4,2.6 16.4,3.8 V16.2 Q16.4,17.4 15.2,17.4 H3.8 Q2.6,17.4 2.6,16.2 V9 Q2.6,7.8 3.8,7.8 H6.6 Z" fill="#f8f8f8" stroke="#ff00ff" stroke-width="1"/><path d="M9.5,6 H14 V14.5 H5.5 V10.5 H9.5 Z" fill="#ff00ff" stroke="#3c3c3c" stroke-width="1"/></svg>
<span class="t" style="left:1771.30px;top:311.00px;font-size:12px;color:#000;letter-spacing:-0.045px;">Zahuštění makroprvků</span>
<svg style="left:1750px;top:331px;" width="20" height="20" viewBox="0 0 20 20"><rect x="2.6" y="2.6" width="15" height="14.8" fill="#fff" stroke="#3c3c3c" stroke-width="1.2"/><path d="M10,2.6 V17.4 M2.6,7.5 H17.6 M2.6,12.5 H17.6" stroke="#3c3c3c" stroke-width="1" fill="none"/><path d="M2.6,2.6 L10,7.5 L17.6,2.6 M2.6,7.5 L10,2.6 L17.6,7.5 M2.6,7.5 L10,12.5 L17.6,7.5 M2.6,12.5 L10,7.5 L17.6,12.5 M2.6,12.5 L10,17.4 L17.6,12.5 M2.6,17.4 L10,12.5 L17.6,17.4" stroke="#3c3c3c" stroke-width="0.7" fill="none"/></svg>
<span class="t" style="left:1771.30px;top:333.00px;font-size:12px;color:#000;letter-spacing:-0.293px;">Generování sítě</span>
<div style="left:1748px;top:355px;width:165px;height:1px;background:#a0a0a0"></div>
<svg style="left:1750px;top:360px;" width="20" height="20" viewBox="0 0 20 20"><path d="M2.4,2.6 L10,9 L17.8,2.6" stroke="#3c3c3c" stroke-width="0.8" fill="none"/><path d="M10,10.4 L14,15.8 H6 Z" fill="#ff00ff"/><path d="M5.6,15.9 H14.4" stroke="#777" stroke-width="0.8"/><circle cx="10" cy="9" r="1.6" fill="#f0f0f0" stroke="#3c3c3c" stroke-width="0.9"/></svg>
<span class="t" style="left:1771.30px;top:362.00px;font-size:12px;color:#000;letter-spacing:-0.034px;">Podpory styčníků</span>
<svg style="left:1750px;top:382px;" width="20" height="20" viewBox="0 0 20 20"><g transform="translate(0,-1.9)"><path d="M2.4,18.4 L16.6,4.6" stroke="#3c3c3c" stroke-width="1.8"/><path d="M4.4,16.6 L7.6,18.4 H3 Z M8.4,12.4 L12,14.4 H7 Z M12.8,8.2 L16.4,10.2 H11.4 Z" fill="#ff00ff"/><path d="M3,18.6 H8 M7,14.6 H12.4 M11.4,10.4 H16.8" stroke="#777" stroke-width="0.7"/></g></svg>
<span class="t" style="left:1771.30px;top:384.00px;font-size:12px;color:#000;letter-spacing:0.073px;">Podpory linií</span>
<svg style="left:1750px;top:404px;" width="20" height="20" viewBox="0 0 20 20"><g transform="translate(0,1.5)"><rect x="4.2" y="7.5" width="11.6" height="3.2" fill="#ff00ff" stroke="#3c3c3c" stroke-width="1"/><path d="M3.4,12 H5.6 M14.4,12 H16.6" stroke="#3c3c3c" stroke-width="1.6"/><path d="M4.4,10.6 V12 M15.6,10.6 V12" stroke="#3c3c3c" stroke-width="1"/></g></svg>
<span class="t" style="left:1771.30px;top:406.00px;font-size:12px;color:#000;letter-spacing:-0.108px;">Nosníky</span>
<svg style="left:1750px;top:426px;" width="20" height="20" viewBox="0 0 20 20"><path d="M2,10.4 H17.4" stroke="#3c3c3c" stroke-width="0.9"/><circle cx="9.6" cy="10.4" r="2.2" fill="#ff00ff" stroke="#903090" stroke-width="0.6"/></svg>
<span class="t" style="left:1771.30px;top:428.00px;font-size:12px;color:#000;letter-spacing:0.093px;">Vnitřní klouby</span>
<svg style="left:1750px;top:448px;" width="20" height="20" viewBox="0 0 20 20"><rect x="4.4" y="6.4" width="11.4" height="4" fill="#fff" stroke="#3c3c3c" stroke-width="1"/><rect x="2.4" y="9.6" width="15.4" height="5.6" fill="#ff00ff" stroke="#3c3c3c" stroke-width="0.7"/></svg>
<span class="t" style="left:1771.30px;top:450.00px;font-size:12px;color:#000;letter-spacing:-0.025px;">Podloží makroprvků</span>
<div style="left:1748px;top:472px;width:165px;height:1px;background:#a0a0a0"></div>
<svg style="left:1750px;top:477px;" width="20" height="20" viewBox="0 0 20 20"><circle cx="10" cy="10" r="7.2" fill="#fff" stroke="#3c3c3c" stroke-width="1"/><path d="M10,5.8 V13" stroke="#1a6fc8" stroke-width="1.6"/><path d="M7.6,11.2 L10,14 L12.4,11.2 Z" fill="#1a6fc8" stroke="#1a6fc8" stroke-width="0.5"/></svg>
<span class="t" style="left:1771.30px;top:479.00px;font-size:12px;color:#000;letter-spacing:-0.253px;">Zatěžovací stavy</span>
<svg style="left:1750px;top:499px;" width="20" height="20" viewBox="0 0 20 20"><path d="M10,2.4 V9.4" stroke="#1a6fc8" stroke-width="1.2"/><path d="M8,7.6000000000000005 L10,10.4 L12,7.6000000000000005 Z" fill="#1a6fc8" stroke="#1a6fc8" stroke-width="0.5"/><path d="M2.2,15.6 H17.8" stroke="#3c3c3c" stroke-width="0.9"/><circle cx="10" cy="15.6" r="1.9" fill="#fff" stroke="#3c3c3c" stroke-width="0.9"/></svg>
<span class="t" style="left:1771.30px;top:501.00px;font-size:12px;color:#000;letter-spacing:-0.183px;">Zatížení styčníků</span>
<svg style="left:1750px;top:521px;" width="20" height="20" viewBox="0 0 20 20"><g transform="translate(0,-2.1)"><path d="M6,7.4 H7.6 V8.4 H9.2 V7.4 H10.8 V8.4 H12.4 V7.4 H14 V10.8 H6 Z" fill="#1a6fc8"/><path d="M3.2,11.4 H16.8" stroke="#222" stroke-width="1.6"/></g></svg>
<span class="t" style="left:1771.30px;top:523.00px;font-size:12px;color:#000;letter-spacing:-0.122px;">Zatížení linií</span>
<svg style="left:1750px;top:543px;" width="20" height="20" viewBox="0 0 20 20"><g transform="translate(0,-2)"><path d="M10,5.5 H14 V15 H5.5 V11 H10 Z" fill="#d8e8f8" stroke="#3c3c3c" stroke-width="1"/><path d="M10.8,7 H13 M10.8,9 H13 M10.8,11 H13 M6.6,12.4 H13 M6.6,13.8 H13" stroke="#1a6fc8" stroke-width="0.9" stroke-dasharray="0.9 0.9"/></g></svg>
<span class="t" style="left:1771.30px;top:545.00px;font-size:12px;color:#000;letter-spacing:-0.093px;">Zatížení makroprvků</span>
<svg style="left:1750px;top:565px;" width="20" height="20" viewBox="0 0 20 20"><rect x="2.5" y="2.5" width="15" height="15" fill="#fff" stroke="#3c3c3c" stroke-width="1"/><path d="M10,7.8 L12.2,10 L10,12.2 L7.800,10 Z" fill="#1a6fc8"/></svg>
<span class="t" style="left:1771.30px;top:567.00px;font-size:12px;color:#000;letter-spacing:-0.195px;">Volné bodové zatížení</span>
<svg style="left:1750px;top:587px;" width="20" height="20" viewBox="0 0 20 20"><rect x="2.5" y="2.5" width="15" height="15" fill="#fff" stroke="#3c3c3c" stroke-width="1"/><path d="M5.4,14 L13.4,5.6" stroke="#1a6fc8" stroke-width="1.7"/></svg>
<span class="t" style="left:1771.30px;top:589.00px;font-size:12px;color:#000;letter-spacing:-0.170px;">Volné liniové zatížení</span>
<svg style="left:1750px;top:609px;" width="20" height="20" viewBox="0 0 20 20"><rect x="2.5" y="2.5" width="15" height="15" fill="#fff" stroke="#3c3c3c" stroke-width="1"/><rect x="7.4" y="5.6" width="7.4" height="4" fill="#1a6fc8"/></svg>
<span class="t" style="left:1771.30px;top:611.00px;font-size:12px;color:#000;letter-spacing:-0.243px;">Volné plošné zatížení</span>
<svg style="left:1750px;top:631px;" width="20" height="20" viewBox="0 0 20 20"><circle cx="10" cy="10" r="7.2" fill="#fff" stroke="#3c3c3c" stroke-width="1"/><text x="10" y="14.2" text-anchor="middle" font-family="Liberation Sans, sans-serif" font-size="11.5" font-weight="bold" fill="#1a6fc8">1</text></svg>
<span class="t" style="left:1771.30px;top:633.00px;font-size:12px;color:#000;letter-spacing:-0.188px;">Kombinace MSÚ</span>
<svg style="left:1750px;top:653px;" width="20" height="20" viewBox="0 0 20 20"><circle cx="10" cy="10" r="7.2" fill="#fff" stroke="#3c3c3c" stroke-width="1"/><text x="10" y="14.2" text-anchor="middle" font-family="Liberation Sans, sans-serif" font-size="11.5" font-weight="bold" fill="#1a6fc8">2</text></svg>
<span class="t" style="left:1771.30px;top:655.00px;font-size:12px;color:#000;letter-spacing:-0.213px;">Kombinace MSP</span>
<div style="left:1748px;top:677px;width:165px;height:1px;background:#a0a0a0"></div>
<svg style="left:1750px;top:682px;" width="20" height="20" viewBox="0 0 20 20"><text x="10" y="8.4" text-anchor="middle" font-family="Liberation Sans, sans-serif" font-size="8.6" font-weight="bold" fill="#333">1,2</text><rect x="2.5" y="11.5" width="14.6" height="5.6" fill="#ffd040" stroke="#3c3c3c" stroke-width="1"/><path d="M5,14.4 H15" stroke="#d00000" stroke-width="1.4" stroke-dasharray="1.6 1"/></svg>
<span class="t" style="left:1771.30px;top:684.00px;font-size:12px;color:#000;letter-spacing:-0.083px;">Parametry dimenzování</span>
<svg style="left:1750px;top:704px;" width="20" height="20" viewBox="0 0 20 20"><path d="M10,5.8 H14 V15.4 H5.6 V11.4 H10 Z" fill="#d81010" stroke="#6a1a1a" stroke-width="1"/></svg>
<span class="t" style="left:1771.30px;top:706.00px;font-size:12px;color:#000;letter-spacing:-0.021px;">Dimenzování makroprvků</span>
<div style="left:1748px;top:728px;width:165px;height:1px;background:#a0a0a0"></div>
<svg style="left:1750px;top:733px;" width="20" height="20" viewBox="0 0 20 20"><path d="M10,2.4 V9" stroke="#d00000" stroke-width="1.1"/><path d="M8,7.2 L10,10 L12,7.2 Z" fill="#d00000" stroke="#d00000" stroke-width="0.5"/><rect x="2.5" y="11.5" width="15" height="6" fill="#ffd040" stroke="#3c3c3c" stroke-width="1"/><path d="M3.4,14.8 H16.6" stroke="#d00000" stroke-width="1.5"/></svg>
<span class="t" style="left:1771.30px;top:735.00px;font-size:12px;color:#000;letter-spacing:-0.051px;">Výpočet</span>
<svg style="left:1750px;top:755px;" width="20" height="20" viewBox="0 0 20 20"><path d="M4.4,3.6 H7.6 V5.6 H9.6 V8.8 H7.6 V10.8 H4.400 V8.8 H2.4 V5.6 H4.4 Z" fill="#d00000" stroke="#6a1a1a" stroke-width="0.8"/><rect x="11.5" y="3.4" width="6" height="13.6" fill="#ffd040" stroke="#3c3c3c" stroke-width="1"/><path d="M12.4,5.4 H16.6 M12.4,7.4 H16.6 M12.4,9.4 H16.6 M12.4,11.4 H16.6 M12.4,13.4 H16.6 M12.4,15.4 H16.6" stroke="#7a5a00" stroke-width="0.8"/></svg>
<span class="t" style="left:1771.30px;top:757.00px;font-size:12px;color:#000;letter-spacing:0.271px;">Hodnoty</span>
<div style="left:1748px;top:780px;width:165px;height:12px;background:#e1e1e1;border:1px solid #adadad;box-sizing:border-box;"></div>
<svg style="left:1824px;top:782px;" width="12" height="8" viewBox="0 0 12 8"><path d="M1.4,2.4 L6,4.8 L10.6,2.4" fill="none" stroke="#333" stroke-width="0.9"/></svg>
<div style="left:1744px;top:797px;width:173px;height:20px;background:#d2d2d2;"></div>
<span class="t" style="left:1748.50px;top:799.00px;font-size:12px;color:#000;letter-spacing:-0.241px;">Výstupy</span>
<div style="left:1903px;top:809px;width:6px;height:2px;background:#000;"></div>
<div style="left:1748px;top:821px;width:165px;height:22px;background:#e1e1e1;border:1px solid #adadad;box-sizing:border-box;"></div>
<span class="t" style="left:1771.40px;top:823.50px;font-size:12px;color:#000;letter-spacing:-0.170px;">Přidat obrázek</span>
<span class="t" style="left:1748.50px;top:846.70px;font-size:12px;color:#000;letter-spacing:-0.016px;">Makroprvky :</span>
<span class="t" style="left:1906.60px;top:846.70px;font-size:12px;color:#000;letter-spacing:-0.088px;">0</span>
<span class="t" style="left:1748.50px;top:867.70px;font-size:12px;color:#000;letter-spacing:-0.293px;">Celkem :</span>
<span class="t" style="left:1906.60px;top:867.70px;font-size:12px;color:#000;letter-spacing:-0.088px;">0</span>
<div style="left:1748px;top:888px;width:165px;height:22px;background:#e1e1e1;border:1px solid #adadad;box-sizing:border-box;"></div>
<span class="t" style="left:1771.40px;top:891.20px;font-size:12px;color:#000;letter-spacing:-0.303px;">Seznam obrázků</span>
<div style="left:1748px;top:916px;width:165px;height:1px;background:#a0a0a0"></div>
<div style="left:1748px;top:923px;width:165px;height:22px;background:#e1e1e1;border:1px solid #adadad;box-sizing:border-box;"></div>
<span class="t" style="left:1771.40px;top:926.00px;font-size:12px;color:#000;letter-spacing:-0.171px;">Správce dodatků</span>
<div style="left:1748px;top:951px;width:165px;height:1px;background:#a0a0a0"></div>
<div style="left:1748px;top:958px;width:80px;height:42px;background:#e1e1e1;border:1px solid #adadad;box-sizing:border-box;"></div>
<div style="left:1833px;top:958px;width:80px;height:42px;background:#e1e1e1;border:1px solid #adadad;box-sizing:border-box;"></div>
<div style="left:1748px;top:1003px;width:165px;height:22px;background:#e1e1e1;border:1px solid #adadad;box-sizing:border-box;"></div>
<span class="t" style="left:1771.40px;top:1005.50px;font-size:12px;color:#000;letter-spacing:-0.021px;">Kopírovat pohled</span>
<svg style="left:1752px;top:824px;" width="16" height="16" viewBox="0 0 16 16"><rect x="0.5" y="0.5" width="15" height="15" rx="1.6" fill="#fff" stroke="#8a8a8a" stroke-width="1"/><path d="M3.4,3.4 V12.6 H8.6 V8.8 H3.4 M3.4,3.4 H5.8 L7.0,4.6 V7.6 L5.8,8.8" fill="none" stroke="#222" stroke-width="1.1"/><path d="M11.4,2.2 V8 M8.5,5.1 H14.3" stroke="#00a000" stroke-width="1.9"/></svg>
<svg style="left:1752px;top:891px;" width="16" height="16" viewBox="0 0 16 16"><rect x="0.5" y="0.5" width="15" height="15" rx="1.6" fill="#fff" stroke="#8a8a8a" stroke-width="1"/><path d="M3.4,3.4 V12.6 H8.6 V8.8 H3.4 M3.4,3.4 H5.8 L7.0,4.6 V7.6 L5.8,8.8" fill="none" stroke="#222" stroke-width="1.1"/><path d="M8.6,3.5 H13.6 M8.6,5.5 H13.6 M8.6,7.5 H13.6" stroke="#333" stroke-width="0.9"/></svg>
<svg style="left:1753px;top:927px;" width="14" height="13" viewBox="0 0 14 13"><rect x="0.5" y="0.5" width="13" height="12.4" rx="1" fill="#fff" stroke="#333" stroke-width="1"/><path d="M2.4,2.9 H4.6 M5.8,2.9 H8.2 M9.4,2.9 H11.6 M2.4,4.9 H4.6 M5.8,4.9 H8.2 M9.4,4.9 H11.6 M2.4,6.9 H4.6 M5.8,6.9 H8.2 M9.4,6.9 H11.6 M2.4,8.9 H4.6 M5.8,8.9 H8.2 M9.4,8.9 H11.6 M2.4,10.9 H4.6 M5.8,10.9 H8.2 M9.4,10.9 H11.6 " stroke="#222" stroke-width="1"/></svg>
<svg style="left:1752px;top:1005px;" width="17" height="18" viewBox="0 0 17 18"><rect x="0.5" y="0.5" width="8" height="10" rx="1" fill="#fff" stroke="#8a8a8a" stroke-width="0.9"/><path d="M2.4,1.8 V11.0 H7.6 V7.2 H2.4 M2.4,1.8 H4.8 L6.0,3.0 V6.0 L4.8,7.2" fill="none" stroke="#222" stroke-width="0.9"/><path d="M11,5 H13 V9" fill="none" stroke="#00a000" stroke-width="1.1"/><path d="M11.4,8.4 L13,10.4 L14.6,8.4 Z" fill="#00a000"/><rect x="9.6" y="11.6" width="6.4" height="5" rx="0.8" fill="#fff" stroke="#444" stroke-width="0.9"/><path d="M9.6,13.4 H16 M12,14.8 H13.6" stroke="#444" stroke-width="0.8"/></svg>
<svg style="left:1775.6px;top:964px;" width="25" height="30" viewBox="0 0 25 30"><path d="M6.2,1.6 H18.6 L19.6,2.6 V8 H5.2 V2.6 Z" fill="#fff" stroke="#000" stroke-width="1.1"/>
<path d="M3,4.4 H5.2 V8 H3 Z M19.6,4.4 H21.8 V8 H19.6 Z" fill="#8a7a5a" stroke="#000" stroke-width="0.8"/>
<path d="M2.2,8 H22.6 Q23.6,8 23.6,9 V18.4 Q23.6,19.4 22.600,19.400 H2.2 Q1.2,19.4 1.2,18.4 V9 Q1.2,8 2.2,8 Z" fill="#c8b088" stroke="#000" stroke-width="1.1"/>
<rect x="3.4" y="13" width="18" height="3.4" fill="#222"/><path d="M4,14 H20.6" stroke="#999" stroke-width="0.8" stroke-dasharray="2 1.4"/>
<rect x="2.6" y="9.4" width="1.6" height="1.2" fill="#222"/><rect x="20.6" y="9.4" width="1.6" height="1.2" fill="#222"/>
<path d="M5.2,16.4 H19.6 V27.6 Q19.6,28.600 18.6,28.600 H6.2 Q5.2,28.6 5.2,27.6 Z" fill="#fff" stroke="#000" stroke-width="1.1"/><path d="M7.4,19.4 H17.4 M9.4,22.4 H17.4 M9.400,24.400 H17.4" stroke="#111" stroke-width="1"/><path d="M7,22.4 H8.2 M7,24.4 H8.2 M11.4,26.4 H13 M14,26.4 H17.4" stroke="#111" stroke-width="1"/></svg>
<svg style="left:1860.4px;top:964px;" width="25" height="30" viewBox="0 0 25 30"><path d="M6.2,1.6 H18.6 L19.6,2.6 V8 H5.2 V2.6 Z" fill="#fff" stroke="#000" stroke-width="1.1"/>
<path d="M3,4.4 H5.2 V8 H3 Z M19.6,4.4 H21.8 V8 H19.6 Z" fill="#8a7a5a" stroke="#000" stroke-width="0.8"/>
<path d="M2.2,8 H22.6 Q23.6,8 23.6,9 V18.4 Q23.6,19.4 22.600,19.400 H2.2 Q1.2,19.4 1.2,18.4 V9 Q1.2,8 2.2,8 Z" fill="#c8b088" stroke="#000" stroke-width="1.1"/>
<rect x="3.4" y="13" width="18" height="3.4" fill="#222"/><path d="M4,14 H20.6" stroke="#999" stroke-width="0.8" stroke-dasharray="2 1.4"/>
<rect x="2.6" y="9.4" width="1.6" height="1.2" fill="#222"/><rect x="20.6" y="9.4" width="1.6" height="1.2" fill="#222"/>
<path d="M5.2,16.4 H19.6 V27.6 Q19.6,28.600 18.6,28.600 H6.2 Q5.2,28.6 5.2,27.6 Z" fill="#fff" stroke="#000" stroke-width="1.1"/><path d="M9.6,18.6 H7.6 V26.4 H9.6" fill="none" stroke="#e81010" stroke-width="1.1"/><path d="M10.6,18.6 H18 V26.6 H15.6 V24.6 H14 V22.600 H12.4 V20.600 H10.6 Z" fill="#fff" stroke="#e81010" stroke-width="1"/><path d="M12.400,20.6 H18 M14,22.6 H18 M15.6,24.6 H18" stroke="#e81010" stroke-width="1"/></svg>
<div style="left:3px;top:792px;width:20px;height:235px;background:#d0d0d0;overflow:hidden;"><span class="t" style="left:13.8px;top:231.2px;font-size:11.8px;transform-origin:0 0;transform:rotate(-90deg) translate(0,-12px);letter-spacing:0.143px;">Makroprvky</span></div>
<div style="left:15px;top:800px;width:2px;height:6px;background:#111;"></div>
<div style="left:28px;top:798px;width:48px;height:22px;background:#e1e1e1;border:1px solid #adadad;box-sizing:border-box;"></div>
<svg style="left:34px;top:802px;" width="42" height="15" viewBox="0 0 42 15"><g fill="#2a2a2a"><rect x="2" y="1.2" width="2.6" height="2.4"/><rect x="2" y="6.2" width="2.6" height="2.4"/><rect x="2" y="11.2" width="2.6" height="2.4"/>
<rect x="7" y="1.2" width="17" height="2.4"/><rect x="7" y="6.2" width="17" height="2.4"/><rect x="7" y="11.2" width="17" height="2.4"/></g><path d="M32,5.4 H39.2 L35.6,9.2 Z" fill="#000"/></svg>
<div style="left:81px;top:798px;width:120px;height:22px;background:#e1e1e1;border:1px solid #adadad;box-sizing:border-box;"></div>
<svg style="left:84px;top:803px;" width="12" height="12" viewBox="0 0 12 12"><path d="M5.6,0.6 V11 M0.400,5.8 H10.8" stroke="#0a9a0a" stroke-width="2.7"/></svg>
<svg style="left:98px;top:799px;" width="20" height="20" viewBox="0 0 20 20"><path d="M12.2,5.600 C12.8,3.200 14.800,2.800 15.600,4.400 C16.200,5.600 16.600,7.200 18,7.400" fill="none" stroke="#444" stroke-width="0.9"/>
<g transform="rotate(45 7.5 10.4)"><rect x="3.200" y="3.100" width="8.600" height="14.600" rx="4.300" fill="#fff" stroke="#3a3a3a" stroke-width="1.100"/><path d="M3.800,8.400 V7.400 C3.800,5.400 5.300,3.800 7.500,3.700 V8.400 Z" fill="#22c022"/><path d="M3.200,8.400 H11.800 M7.500,3.100 V8.400" stroke="#3a3a3a" stroke-width="0.9"/></g></svg>
<span class="t" style="left:119.40px;top:800.50px;font-size:12px;color:#000;letter-spacing:-0.015px;">Přidat graficky</span>
<div style="left:206px;top:798px;width:116px;height:22px;background:#e1e1e1;border:1px solid #adadad;box-sizing:border-box;"></div>
<svg style="left:209px;top:803px;" width="12" height="12" viewBox="0 0 12 12"><path d="M5.6,0.6 V11 M0.400,5.8 H10.8" stroke="#0a9a0a" stroke-width="2.7"/></svg>
<svg style="left:222px;top:800px;" width="20" height="18" viewBox="0 0 20 18"><path d="M9,4.400 C9,2.400 13,3.200 15.600,1.200" fill="none" stroke="#333" stroke-width="0.9"/>
<rect x="1" y="4.500" width="17.600" height="11" rx="1.400" fill="#fff" stroke="#222" stroke-width="1.1"/>
<path d="M3,7.400 H16.600 M3,9.800 H16.600" stroke="#222" stroke-width="1.300" stroke-dasharray="1.500 0.800"/>
<path d="M3,12.600 H5 M6.200,12.600 H13.400 M14.600,12.600 H16.600" stroke="#222" stroke-width="1.300"/>
<path d="M8,7.400 H12.400 M12.400,9.800 H16.600" stroke="#0a9a0a" stroke-width="1.300" stroke-dasharray="1.500 0.800"/></svg>
<span class="t" style="left:244.20px;top:800.50px;font-size:12px;color:#000;letter-spacing:-0.098px;">Přidat textově</span>
<div style="left:327px;top:798px;width:126px;height:22px;background:#e1e1e1;border:1px solid #adadad;box-sizing:border-box;"></div>
<svg style="left:332px;top:801px;" width="30" height="14" viewBox="0 0 30 14"><rect x="0.600" y="2.400" width="1.400" height="1.400" fill="#222"/><path d="M3.600,3.100 H14.800" stroke="#222" stroke-width="1.300"/><path d="M20.200,11.400 L27.400,3.800" stroke="#0a9a0a" stroke-width="2.400" stroke-linecap="round"/></svg>
<span class="t" style="left:365.20px;top:800.50px;font-size:12px;color:#000;letter-spacing:-0.149px;">Upravit (číslo 2)</span>
<div style="left:458px;top:798px;width:137px;height:22px;background:#e1e1e1;border:1px solid #adadad;box-sizing:border-box;"></div>
<svg style="left:463px;top:801px;" width="30" height="14" viewBox="0 0 30 14"><rect x="0.600" y="2.400" width="1.400" height="1.400" fill="#222"/><path d="M3.600,3.100 H14.800" stroke="#222" stroke-width="1.300"/><path d="M19,4.600 L27,12.200 M27,4.600 L19,12.200" stroke="#e01010" stroke-width="2.100"/></svg>
<span class="t" style="left:496.30px;top:800.50px;font-size:12px;color:#000;letter-spacing:-0.121px;">Odstranit (číslo 2)</span>
<div style="left:28px;top:826px;width:1039px;height:197px;background:#f8f8f8;border:1px solid #646464;box-sizing:border-box;"></div>
<div style="left:29px;top:827px;width:1037px;height:37px;background:#e1e1e1;"></div>
<div style="left:29px;top:864px;width:1037px;height:1px;background:#a0a0a0"></div>
<div style="left:29px;top:865px;width:38px;height:18px;background:#e6e6e6;"></div>
<div style="left:68px;top:865px;width:998px;height:18px;background:#fbfbfb;"></div>
<div style="left:29px;top:883px;width:1037px;height:1px;background:#a0a0a0"></div>
<div style="left:29px;top:884px;width:38px;height:18px;background:#b4dfbb;"></div>
<div style="left:68px;top:884px;width:998px;height:18px;background:#c6efce;"></div>
<div style="left:29px;top:902px;width:1037px;height:1px;background:#a0a0a0"></div>
<div style="left:67px;top:827px;width:1px;height:76px;background:#a0a0a0"></div>
<div style="left:367px;top:827px;width:1px;height:76px;background:#a0a0a0"></div>
<div style="left:448px;top:827px;width:1px;height:76px;background:#a0a0a0"></div>
<span class="t" style="left:31.60px;top:828.80px;font-size:12px;color:#000;letter-spacing:-0.469px;">Číslo</span>
<svg style="left:57.6px;top:834px;" width="8" height="5" viewBox="0 0 8 5"><path d="M0,4.200 L3.600,0.400 L7.200,4.200 Z" fill="#a8a8a8"/></svg>
<span class="t" style="left:185.10px;top:828.80px;font-size:12px;color:#000;letter-spacing:-0.131px;">Seznam linií</span>
<span class="t" style="left:384.20px;top:828.80px;font-size:12px;color:#000;letter-spacing:-0.116px;">Tloušťka</span>
<span class="t" style="left:391.90px;top:847.80px;font-size:12px;color:#000;letter-spacing:0.306px;">D [m]</span>
<span class="t" style="left:735.50px;top:828.80px;font-size:12px;color:#000;letter-spacing:0.039px;">Materiál</span>
<span class="t" style="left:44.30px;top:866.80px;font-size:12px;color:#000;letter-spacing:-0.088px;">1</span>
<span class="t" style="left:70.00px;top:866.80px;font-size:12px;color:#000;letter-spacing:0.085px;">4-8</span>
<span class="t" style="left:423.80px;top:866.80px;font-size:12px;color:#000;letter-spacing:-0.340px;">0,20</span>
<span class="t" style="left:451.30px;top:866.80px;font-size:12px;color:#000;letter-spacing:-0.422px;">C 25/30;</span>
<span class="t" style="left:496.70px;top:866.80px;font-size:12px;color:#000;letter-spacing:-0.429px;">E<sub>cm</sub> = 31000,00 MPa;</span>
<span class="t" style="left:607.30px;top:866.80px;font-size:12px;color:#000;letter-spacing:-0.436px;">G = 12917,00 MPa;</span>
<span class="t" style="left:707.70px;top:866.80px;font-size:12px;color:#000;letter-spacing:-0.317px;">α<sub>t</sub> = 0,000010 1/K;</span>
<span class="t" style="left:803.30px;top:866.80px;font-size:12px;color:#000;letter-spacing:-0.076px;">γ = 25,00 kN/m<sup>3</sup>;</span>
<span class="t" style="left:895.00px;top:866.80px;font-size:12px;color:#000;letter-spacing:-0.311px;">f<sub>ck</sub> = 25,00 MPa;</span>
<span class="t" style="left:981.00px;top:866.80px;font-size:12px;color:#000;letter-spacing:-0.147px;">f<sub>ctm</sub> = 2,60 MPa</span>
<span class="t" style="left:44.30px;top:885.80px;font-size:12px;color:#000;letter-spacing:-0.088px;">2</span>
<span class="t" style="left:70.00px;top:885.80px;font-size:12px;color:#000;letter-spacing:-0.192px;">1-3,8</span>
<span class="t" style="left:423.80px;top:885.80px;font-size:12px;color:#000;letter-spacing:-0.340px;">0,20</span>
<span class="t" style="left:451.30px;top:885.80px;font-size:12px;color:#000;letter-spacing:-0.422px;">C 25/30;</span>
<span class="t" style="left:496.70px;top:885.80px;font-size:12px;color:#000;letter-spacing:-0.429px;">E<sub>cm</sub> = 31000,00 MPa;</span>
<span class="t" style="left:607.30px;top:885.80px;font-size:12px;color:#000;letter-spacing:-0.436px;">G = 12917,00 MPa;</span>
<span class="t" style="left:707.70px;top:885.80px;font-size:12px;color:#000;letter-spacing:-0.317px;">α<sub>t</sub> = 0,000010 1/K;</span>
<span class="t" style="left:803.30px;top:885.80px;font-size:12px;color:#000;letter-spacing:-0.076px;">γ = 25,00 kN/m<sup>3</sup>;</span>
<span class="t" style="left:895.00px;top:885.80px;font-size:12px;color:#000;letter-spacing:-0.311px;">f<sub>ck</sub> = 25,00 MPa;</span>
<span class="t" style="left:981.00px;top:885.80px;font-size:12px;color:#000;letter-spacing:-0.147px;">f<sub>ctm</sub> = 2,60 MPa</span>
<div style="left:413px;top:311px;width:659px;height:290px;background:#f0f0f0;border-radius:8px;border:1px solid #a4a4a4;box-sizing:border-box;box-shadow:0 20px 50px rgba(0,0,0,0.27),0 1px 26px rgba(0,0,0,0.12);overflow:hidden;"><div style="left:0;top:0;width:659px;height:29px;background:#fff"></div></div>
<span class="t" style="left:423.40px;top:317.60px;font-size:12px;color:#000;letter-spacing:-0.091px;">Úprava vlastností makroprvku č. 2</span>
<svg style="left:1050px;top:320px;" width="14" height="14" viewBox="0 0 14 14"><path d="M1.800,1.800 L11.400,11.400 M11.400,1.800 L1.800,11.400" stroke="#000" stroke-width="1.700"/></svg>
<div style="left:422px;top:356px;width:11px;height:1px;background:#a0a0a0"></div>
<div style="left:542px;top:356px;width:318px;height:1px;background:#a0a0a0"></div>
<span class="t" style="left:436.20px;top:349.00px;font-size:12px;color:#000;letter-spacing:0.089px;">Obvod makroprvku</span>
<div style="left:865px;top:356px;width:10px;height:1px;background:#a0a0a0"></div>
<div style="left:929px;top:356px;width:135px;height:1px;background:#a0a0a0"></div>
<span class="t" style="left:879.40px;top:349.00px;font-size:12px;color:#000;letter-spacing:-0.116px;">Tloušťka</span>
<span class="t" style="left:422.20px;top:373.70px;font-size:12px;color:#000;letter-spacing:-0.245px;">Seznam linií :</span>
<div style="left:496px;top:372px;width:364px;height:20px;background:#fff;border:1px solid #7a7a7a;box-sizing:border-box;"></div>
<span class="t" style="left:501.20px;top:373.70px;font-size:12px;color:#000;letter-spacing:-0.192px;">1-3,8</span>
<span class="t" style="left:865.40px;top:373.70px;font-size:12px;color:#000;letter-spacing:-0.209px;">Tloušťka : D =</span>
<div style="left:944px;top:372px;width:96px;height:20px;background:#fff;border:1px solid #7a7a7a;box-sizing:border-box;"></div>
<span class="t" style="left:1012.30px;top:373.70px;font-size:12px;color:#000;letter-spacing:-0.340px;">0,20</span>
<span class="t" style="left:1045.60px;top:373.70px;font-size:12px;color:#000;letter-spacing:0.509px;">[m]</span>
<div style="left:422px;top:429px;width:11px;height:1px;background:#a0a0a0"></div>
<div style="left:482px;top:429px;width:582px;height:1px;background:#a0a0a0"></div>
<span class="t" style="left:436.30px;top:421.80px;font-size:12px;color:#000;letter-spacing:-0.011px;">Materiál</span>
<span class="t" style="left:422.30px;top:445.80px;font-size:12px;color:#000;letter-spacing:-0.087px;">Typ materiálu :</span>
<div style="left:505px;top:445px;width:181px;height:20px;background:#fff;border:1px solid #7a7a7a;box-sizing:border-box;"></div>
<span class="t" style="left:508.70px;top:447.00px;font-size:12px;color:#000;letter-spacing:0.114px;">beton</span>
<svg style="left:672px;top:453px;" width="9" height="5" viewBox="0 0 9 5"><path d="M0.400,0.200 H8.200 L4.300,4.400 Z" fill="#000"/></svg>
<div style="left:505px;top:471px;width:88px;height:22px;background:#e1e1e1;border:1px solid #adadad;box-sizing:border-box;"></div>
<span class="t" style="left:529.10px;top:474.00px;font-size:12px;color:#000;letter-spacing:-0.129px;">Katalog</span>
<div style="left:598px;top:471px;width:88px;height:22px;background:#e1e1e1;border:1px solid #adadad;box-sizing:border-box;"></div>
<span class="t" style="left:624.20px;top:474.00px;font-size:12px;color:#000;letter-spacing:-0.155px;">Vlastní</span>
<div style="left:691px;top:445px;width:373px;height:109px;background:#f0f0f0;border:1px solid #b2b2b2;box-sizing:border-box;overflow:hidden;"><span class="t" style="left:5.30px;top:1.80px;font-size:12px;color:#000;font-weight:bold;letter-spacing:0.138px;">C 25/30</span><span class="t" style="left:5.30px;top:17.20px;font-size:12px;color:#000;letter-spacing:0.071px;">Modul pružnosti :</span><span class="t" style="left:211.20px;top:17.20px;font-size:12px;color:#000;letter-spacing:-0.602px;">E<sub>cm</sub> =</span><span class="t" style="left:262.40px;top:17.20px;font-size:12px;color:#000;letter-spacing:-0.572px;">31000,00 MPa</span><span class="t" style="left:5.30px;top:33.90px;font-size:12px;color:#000;letter-spacing:0.023px;">Modul pružnosti ve smyku :</span><span class="t" style="left:211.20px;top:33.90px;font-size:12px;color:#000;letter-spacing:-0.429px;">G =</span><span class="t" style="left:262.40px;top:33.90px;font-size:12px;color:#000;letter-spacing:-0.572px;">12917,00 MPa</span><span class="t" style="left:5.30px;top:49.20px;font-size:12px;color:#000;letter-spacing:-0.029px;">Součinitel teplotní roztažnosti :</span><span class="t" style="left:211.20px;top:49.20px;font-size:12px;color:#000;letter-spacing:-0.111px;">α<sub>t</sub> =</span><span class="t" style="left:262.40px;top:49.20px;font-size:12px;color:#000;letter-spacing:-0.451px;">0,000010 1/K</span><span class="t" style="left:5.30px;top:66.80px;font-size:12px;color:#000;letter-spacing:-0.119px;">Měrná tíha :</span><span class="t" style="left:211.20px;top:66.80px;font-size:12px;color:#000;letter-spacing:-0.115px;">γ =</span><span class="t" style="left:262.40px;top:66.80px;font-size:12px;color:#000;letter-spacing:-0.080px;">25,00 kN/m<sup>3</sup></span><span class="t" style="left:5.30px;top:82.00px;font-size:12px;color:#000;letter-spacing:-0.150px;">Válcová pevnost v tlaku :</span><span class="t" style="left:211.20px;top:82.00px;font-size:12px;color:#000;letter-spacing:-0.255px;">f<sub>ck</sub> =</span><span class="t" style="left:262.40px;top:82.00px;font-size:12px;color:#000;letter-spacing:-0.516px;">25,00 MPa</span><span class="t" style="left:5.30px;top:98.70px;font-size:12px;color:#000;letter-spacing:-0.129px;">Pevnost v tahu :</span><span class="t" style="left:211.20px;top:98.70px;font-size:12px;color:#000;letter-spacing:0.017px;">f<sub>ctm</sub> =</span><span class="t" style="left:262.40px;top:98.70px;font-size:12px;color:#000;letter-spacing:-0.547px;">2,60 MPa</span></div>
<svg style="left:1049px;top:452px;" width="11" height="96" viewBox="0 0 11 96"><path d="M0.800,4.800 L5.500,0.400 L10.200,4.800 Z M0.800,90.200 L5.500,94.800 L10.200,90.200 Z" fill="#606060"/><rect x="0.200" y="11" width="10.400" height="67" fill="#c8c8c8"/></svg>
<div style="left:422px;top:562px;width:642px;height:1px;background:#a0a0a0"></div>
<div style="left:697px;top:571px;width:88px;height:22px;background:#e1e1e1;border:1px solid #0078d7;box-sizing:border-box;"><div style="left:1px;top:1px;width:84px;height:18px;border:1px dotted #000;box-sizing:border-box"></div></div>
<span class="t" style="left:716.50px;top:574.40px;font-size:12px;color:#000;letter-spacing:-0.522px;">OK +</span>
<svg style="left:751px;top:576px;" width="13" height="13" viewBox="0 0 13 13"><path d="M6.200,0.600 L11.800,6.200 H8.200 V11.800 H4.200 V6.200 H0.600 Z" fill="#f0921e"/></svg>
<div style="left:883px;top:571px;width:88px;height:22px;background:#e1e1e1;border:1px solid #adadad;box-sizing:border-box;"></div>
<svg style="left:908px;top:575px;" width="16" height="13" viewBox="0 0 16 13"><path d="M1.800,6.800 L5.800,10.800 L13.800,2.200" fill="none" stroke="#0a9a0a" stroke-width="2.800"/></svg>
<span class="t" style="left:927.60px;top:574.40px;font-size:12px;color:#000;letter-spacing:-0.772px;">OK</span>
<div style="left:976px;top:571px;width:88px;height:22px;background:#e1e1e1;border:1px solid #adadad;box-sizing:border-box;"></div>
<svg style="left:992px;top:575px;" width="14" height="13" viewBox="0 0 14 13"><path d="M2,1.600 L11.400,11.400 M11.400,1.600 L2,11.400" stroke="#d81010" stroke-width="3"/></svg>
<span class="t" style="left:1010.20px;top:574.40px;font-size:12px;color:#000;letter-spacing:-0.093px;">Storno</span>
</div></body></html>
